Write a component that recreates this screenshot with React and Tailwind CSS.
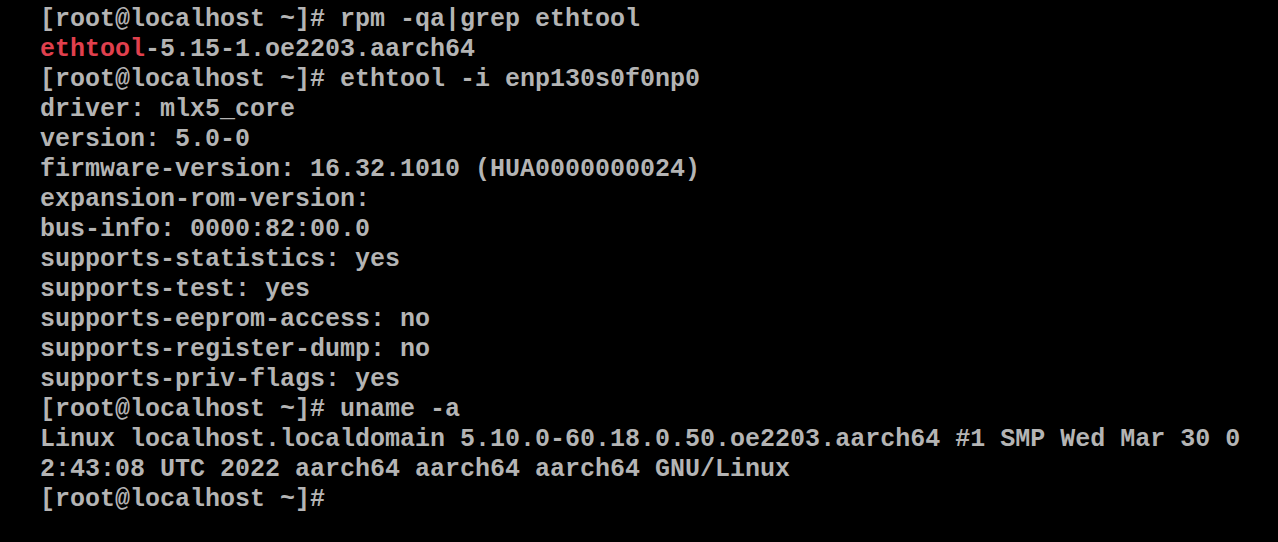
export default function App() {
  const lines = [
    "[root@localhost ~]# rpm -qa|grep ethtool",
    null,
    "[root@localhost ~]# ethtool -i enp130s0f0np0",
    "driver: mlx5_core",
    "version: 5.0-0",
    "firmware-version: 16.32.1010 (HUA0000000024)",
    "expansion-rom-version:",
    "bus-info: 0000:82:00.0",
    "supports-statistics: yes",
    "supports-test: yes",
    "supports-eeprom-access: no",
    "supports-register-dump: no",
    "supports-priv-flags: yes",
    "[root@localhost ~]# uname -a",
    "Linux localhost.localdomain 5.10.0-60.18.0.50.oe2203.aarch64 #1 SMP Wed Mar 30 0",
    "2:43:08 UTC 2022 aarch64 aarch64 aarch64 GNU/Linux",
    "[root@localhost ~]#",
  ];

  return (
    <div className="w-[1278px] h-[542px] bg-black overflow-hidden">
      <pre className="pl-[40px] pt-[5px] font-['Liberation_Mono',monospace] font-bold text-[25px] leading-[30px] text-[#b4b4b4] whitespace-pre">
        {lines.map((line, i) =>
          line === null ? (
            <div key={i}>
              <span className="text-[#e0404e]">ethtool</span>
              -5.15-1.oe2203.aarch64
            </div>
          ) : (
            <div key={i}>{line}</div>
          )
        )}
      </pre>
    </div>
  );
}
